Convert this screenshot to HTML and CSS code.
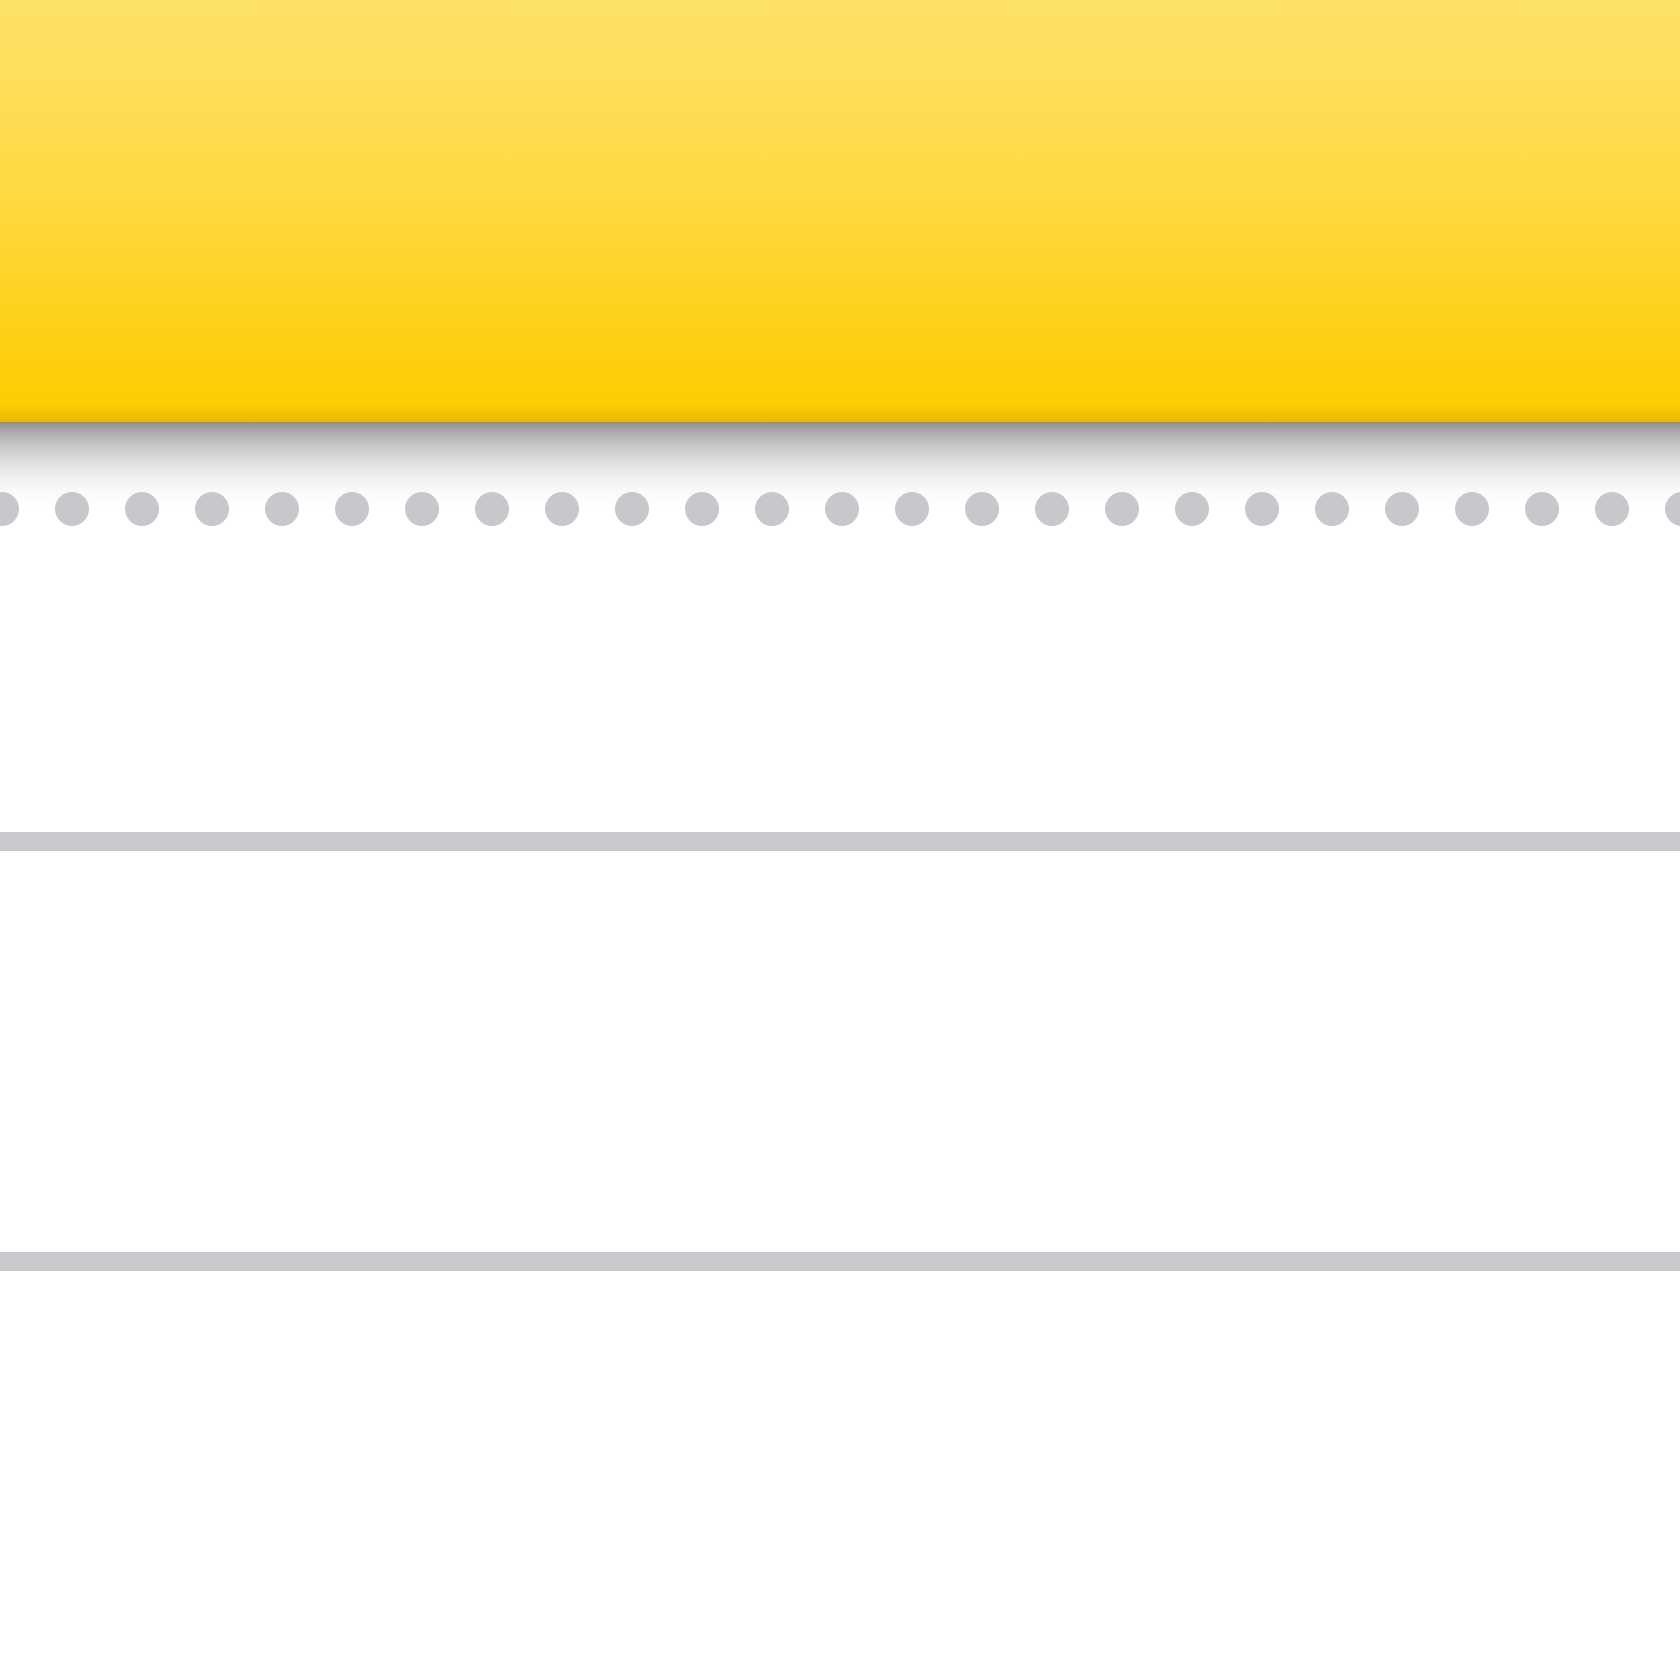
FILE: index.html
```html
<!DOCTYPE html>
<html>
<head>
<meta charset="utf-8">
<link rel="stylesheet" href="styles.css">
</head>
<body>
<div class="icon">
  <div class="header"></div>
  <div class="paper">
    <div class="dots">
      <span class="dot"></span><span class="dot"></span><span class="dot"></span><span class="dot"></span><span class="dot"></span>
      <span class="dot"></span><span class="dot"></span><span class="dot"></span><span class="dot"></span><span class="dot"></span>
      <span class="dot"></span><span class="dot"></span><span class="dot"></span><span class="dot"></span><span class="dot"></span>
      <span class="dot"></span><span class="dot"></span><span class="dot"></span><span class="dot"></span><span class="dot"></span>
      <span class="dot"></span><span class="dot"></span><span class="dot"></span><span class="dot"></span><span class="dot"></span>
    </div>
    <div class="rule rule-first"></div>
    <div class="rule rule-second"></div>
  </div>
</div>
</body>
</html>
```
FILE: styles.css
```css
html, body {
  margin: 0;
  padding: 0;
  background: #ffffff;
}
.icon {
  width: 1680px;
  height: 1680px;
  overflow: hidden;
  display: flex;
  flex-direction: column;
}
.header {
  height: 422px;
  flex: none;
  background: linear-gradient(to bottom, #fde166 0%, #fede5a 20%, #fed83c 50%, #fed11a 75%, #fecc02 96%, #e8b800 100%);
}
.paper {
  flex: 1;
  display: flex;
  flex-direction: column;
  padding-top: 70px;
  background-color: #ffffff;
  background-image: linear-gradient(to bottom, #8e8e8e 0px, #a6a6a6 8px, #c4c4c4 22px, #dcdcdc 38px, #efefef 55px, #fafafa 70px, #ffffff 85px);
  background-repeat: no-repeat;
  background-size: 100% 90px;
}
.dots {
  display: flex;
  gap: 36px;
  margin-left: -15px;
  height: 34px;
}
.dot {
  flex: none;
  width: 34px;
  height: 34px;
  border-radius: 50%;
  background: #c7c7cc;
}
.rule {
  height: 19px;
  background: #c9c8cd;
}
.rule-first {
  margin-top: 306px;
}
.rule-second {
  margin-top: 401px;
}
```
